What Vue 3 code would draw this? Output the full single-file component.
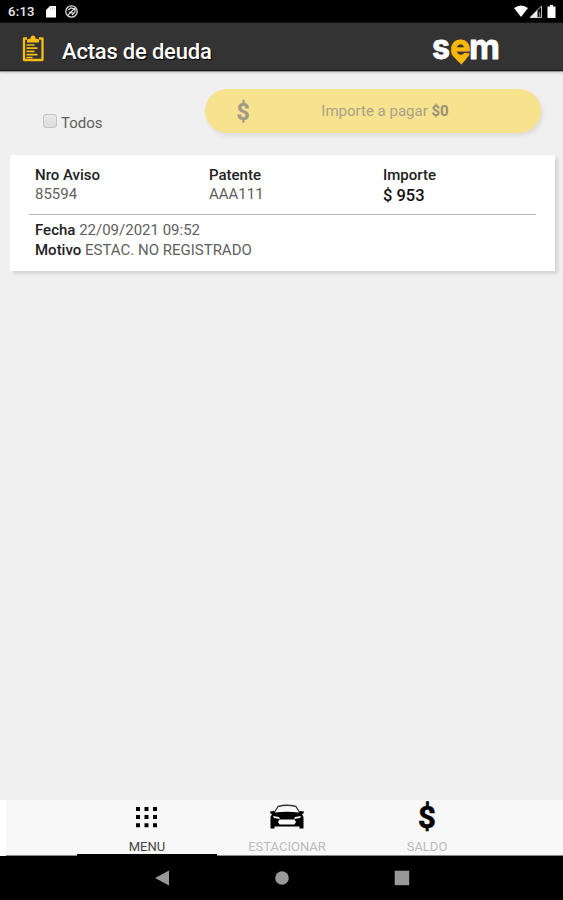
<template>
    <div class="screen">
        <div class="status">
            <span class="status__time">6:13</span>
            <svg class="status__left" width="36" height="16" viewBox="0 0 36 16">
                <path d="M5 2h6v11.500H1V6z" fill="#fff" />
                <path d="M5.500 3.500v2M7.500 3.500v2M9.500 3.500v2" stroke="#aaa" stroke-width=".7" />
                <circle cx="26.500" cy="7.500" r="5.700" fill="none" stroke="#ddd" stroke-width="1.300" />
                <path d="M23 6l3-2 4 1v3l-3 3M23 11l7-7M24 8l4 1" fill="none" stroke="#ddd" stroke-width="1.200" />
            </svg>
            <svg class="status__right" width="44" height="16" viewBox="0 0 44 16">
                <path d="M1 4Q8-1.200 15 4L8 13z" fill="#fff" />
                <path d="M17 13.500L28.500 2v11.500z" fill="none" stroke="#bbb" />
                <path d="M17 13.500L24.500 6v7.500z" fill="#eee" />
                <path d="M26.500 8v5" stroke="#777" stroke-width="1.300" />
                <path d="M37 1h3v1.500h2.500V14h-8V2.500H37z" fill="#fff" />
            </svg>
        </div>

        <header class="header">
            <svg class="header__icon" width="22" height="28" viewBox="0 0 22 28">
                <path d="M5 3.500H2v21.500h18.500V3.500H17" fill="none" stroke="#f8bd12" stroke-width="2.300" stroke-linejoin="round" />
                <path d="M5 7.500V4.500L8.500 3.500c0-4 5-4 5 0l3.500 1v3z" fill="#f8bd12" />
                <path d="M4.500 10h8M4.500 13.200h11M4.500 16.400h8M4.500 19.600h11M4.500 22.500h6" stroke="#f8bd12" stroke-width="1.700" />
            </svg>
            <h1 class="header__title">Actas de deuda</h1>
            <svg class="header__logo" width="72" height="47" viewBox="0 0 72 47">
                <path d="M21 30Q30 36 38.500 29Q36 35 30.500 40.500Q25 36 21 30z" fill="#f8b70c" />
                <g class="logo-text">
                    <text x="1" y="35" textLength="18" lengthAdjust="spacingAndGlyphs" fill="#fff" stroke="#fff">s</text>
                    <text x="19" y="35" textLength="20.500" lengthAdjust="spacingAndGlyphs" fill="#f8b70c" stroke="#f8b70c">e</text>
                    <text x="38" y="35" textLength="31" lengthAdjust="spacingAndGlyphs" fill="#fff" stroke="#fff">m</text>
                </g>
            </svg>
        </header>

        <main class="content">
            <div class="toolbar">
                <label class="all">
                    <input v-model="all" class="all__check" type="checkbox">
                    <span>Todos</span>
                </label>
                <button class="pay" type="button">
                    <span class="pay__icon">$</span>
                    <span class="pay__label">Importe a pagar <b>$0</b></span>
                </button>
            </div>

            <section v-for="acta in actas" :key="acta.aviso" class="card">
                <div class="card__top">
                    <div>
                        <b>Nro Aviso</b>
                        <p>{{ acta.aviso }}</p>
                    </div>
                    <div>
                        <b>Patente</b>
                        <p>{{ acta.patente }}</p>
                    </div>
                    <div>
                        <b>Importe</b>
                        <p class="card__amount">$ {{ acta.importe }}</p>
                    </div>
                </div>
                <div class="card__bottom">
                    <p><b>Fecha</b> {{ acta.fecha }}</p>
                    <p><b>Motivo</b> {{ acta.motivo }}</p>
                </div>
            </section>
        </main>

        <nav class="tabs">
            <div v-for="tab in tabs" :key="tab.id" class="tab" :class="{ 'tab--active': tab.id === 'menu' }">
                <svg v-if="tab.id === 'menu'" class="tab__icon" width="36" height="34" viewBox="0 0 36 34">
                    <path
                        d="M7 7h4v4h-4zM15.500 7h4v4h-4zM24 7h4v4h-4zM7 15h4v4h-4zM15.500 15h4v4h-4zM24 15h4v4h-4zM7 23.300h4v4h-4zM15.500 23.300h4v4h-4zM24 23.300h4v4h-4z"
                    />
                </svg>
                <svg v-else-if="tab.id === 'park'" class="tab__icon" width="36" height="34" viewBox="0 0 36 34">
                    <path d="M5 13L9 6.500Q18 4 27 6.500L31 13" fill="none" stroke="#333" stroke-width="1.300" />
                    <path
                        fill-rule="evenodd"
                        d="M1 11.500l4-.5 1 1.500Q18 11 30 12.500l1-1.500 4 .5-.5 2-1.500.5 1.500 3V28.500H30.500V26.500H5.500v2H1.500V17L3 14l-1.500-.5zM4 16l1 2 6 1-1-2zM32 16l-6 1-1 2 6-1zM10.500 19.500L9 22l1.500 2.500h15L27 22l-1.500-2.500z"
                    />
                </svg>
                <span v-else class="tab__dollar">$</span>
                <span class="tab__label">{{ tab.label }}</span>
            </div>
        </nav>

        <div class="system">
            <svg width="16" height="16" viewBox="0 0 16 16"><path d="M15 .5v15L1 8z" /></svg>
            <svg width="16" height="16" viewBox="0 0 16 16"><circle cx="8" cy="8" r="6.800" /></svg>
            <svg width="16" height="16" viewBox="0 0 16 16"><path d="M.7.700h14.500v14.500H.7z" /></svg>
        </div>
    </div>
</template>

<script setup>
import { ref } from 'vue';

const all = ref(false);

const actas = [
    {
        aviso: '85594',
        patente: 'AAA111',
        importe: 953,
        fecha: '22/09/2021 09:52',
        motivo: 'ESTAC. NO REGISTRADO',
    },
];

const tabs = [
    { id: 'menu', label: 'MENU' },
    { id: 'park', label: 'ESTACIONAR' },
    { id: 'balance', label: 'SALDO' },
];
</script>

<style>
body {
    margin: 0;
}
</style>

<style scoped>
.screen {
    display: flex;
    flex-direction: column;
    height: 900px;
    overflow: hidden;
    background: #f0f0f0;
    color: #606060;
    font-family: Roboto, "Liberation Sans", sans-serif;
}

.screen * {
    box-sizing: border-box;
}

p {
    margin: 0;
}

b {
    font-weight: 500;
}

.status {
    display: flex;
    align-items: center;
    flex: 0 0 23px;
    padding: 0 7px 0 8px;
    background: #000;
    color: #eee;
}

.status__time {
    width: 37px;
    font-size: 13px;
    font-weight: 500;
    letter-spacing: 0.3px;
}

.status__right {
    margin-left: auto;
    margin-right: -1px;
}

.header {
    display: flex;
    align-items: center;
    flex: 0 0 47px;
    padding: 0 60px 0 22px;
    border-bottom: 1px solid #999;
    background: #333;
    box-shadow: inset 0 -1px #181818, 0 1px 2px #ccc;
}

.header__icon {
    margin-top: 3px;
}

.header__title {
    margin: 9px 0 0 18px;
    color: #fff;
    font-size: 22px;
    font-weight: 500;
    line-height: 28px;
    letter-spacing: -0.2px;
    text-shadow: 1px 1px 1px #000;
}

.header__logo {
    margin-left: auto;
    margin-top: 1px;
}

.logo-text {
    font-family: Inter, sans-serif;
    font-size: 35px;
    font-weight: 700;
    stroke-width: 0.8;
    stroke-linejoin: round;
}

.content {
    flex: 1;
    padding: 17px 8px 0 10px;
}

.toolbar {
    display: flex;
    justify-content: space-between;
    height: 44px;
    padding: 0 14px 0 33px;
}

.all {
    display: flex;
    align-items: center;
    gap: 4px;
    height: 20px;
    margin-top: 24px;
    font-size: 15px;
}

.all__check {
    appearance: none;
    width: 14px;
    height: 14px;
    margin: -4px 0 0;
    border: 1px solid #c4c4c4;
    border-radius: 3px;
    background: linear-gradient(#e9e9e9, #ddd);
}

.pay {
    display: flex;
    align-items: center;
    width: 336px;
    height: 44px;
    padding: 0;
    border: 0;
    border-radius: 22px;
    background: #f7e28e;
    box-shadow: 2px 3px 4px #ddd;
    color: #aaa18a;
    font-family: inherit;
    font-size: 15px;
}

.pay__icon {
    width: 76px;
    padding-top: 2px;
    color: #a19b86;
    font-size: 23px;
    font-weight: 700;
    -webkit-text-stroke: 0.3px #a19b86;
}

.pay__label {
    flex: 1;
    padding-right: 52px;
}

.pay b {
    color: #999178;
    font-weight: 700;
}

.card {
    height: 116px;
    margin-top: 22px;
    padding: 11px 19px 0;
    background: #fff;
    box-shadow: 3px 3px 3px #d6d6d6;
    font-size: 15px;
    line-height: 19.500px;
}

.card b {
    color: #222;
}

.card__top {
    display: grid;
    grid-template-columns: 174px 174px 1fr;
    height: 49px;
    padding-left: 6px;
    border-bottom: 1px solid #bbb;
}

.card__top b {
    display: block;
    height: 19px;
}

.card .card__amount {
    margin-top: 1px;
    color: #111;
    font-size: 16.500px;
    font-weight: 500;
}

.card__bottom {
    padding: 6px 0 0 6px;
}

.tabs {
    display: flex;
    flex: 0 0 56px;
    padding-left: 71px;
    border-left: 6px solid #fff;
    background: #f8f8f8;
    box-shadow: inset 0 -1px #888;
}

.tab {
    display: flex;
    flex-direction: column;
    align-items: center;
    width: 140px;
    height: 56px;
    color: #bbb;
}

.tab--active {
    border-bottom: 2px solid #000;
    color: #444;
}

.tab__icon,
.tab__dollar {
    flex: 0 0 34px;
    color: #000;
}

.tab__dollar {
    height: 34px;
    font-size: 31px;
    font-weight: 700;
    line-height: 35px;
    -webkit-text-stroke: 0.6px #000;
}

.tab__label {
    margin-top: 4px;
    font-size: 13px;
    line-height: 18px;
}

.system {
    display: flex;
    justify-content: center;
    align-items: center;
    flex: 0 0 44px;
    gap: 104px;
    background: #000;
    fill: #999;
}
</style>
